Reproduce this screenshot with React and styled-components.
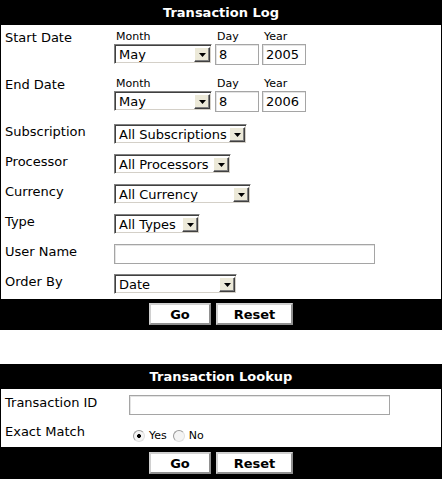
import styled, { createGlobalStyle } from "styled-components";

const GlobalStyle = createGlobalStyle`
  body {
    margin: 0;
    background: #ffffff;
    font-family: "DejaVu Sans", Verdana, sans-serif;
    font-size: 13px;
    color: #000000;
  }
`;

function Select({ value, width }) {
  return (
    <SelectBox $w={width}>
      <SelectValue>{value}</SelectValue>
      <ArrowButton>
        <svg width="7" height="4" viewBox="0 0 7 4">
          <path d="M0 0h7L3.5 4z" fill="#000" />
        </svg>
      </ArrowButton>
    </SelectBox>
  );
}

function Radio({ checked, label }) {
  return (
    <RadioLabel>
      <RadioDot $checked={checked} />
      {label}
    </RadioLabel>
  );
}

function DateRow({ label, year }) {
  return (
    <FormRow $label={109} $top={5} $bottom={7}>
      <RowLabel>{label}</RowLabel>
      <DateGroup>
        <DateField>
          <SmallLabel>Month</SmallLabel>
          <Select value="May" width={98} />
        </DateField>
        <DateField>
          <SmallLabel>Day</SmallLabel>
          <TextInput $w={44} $h={21} defaultValue="8" />
        </DateField>
        <DateField>
          <SmallLabel>Year</SmallLabel>
          <TextInput $w={44} $h={21} defaultValue={year} />
        </DateField>
      </DateGroup>
    </FormRow>
  );
}

export default function App() {
  return (
    <Page>
      <GlobalStyle />
      <Panel>
        <PanelHeader>Transaction Log</PanelHeader>
        <PanelBody>
          <DateRow label="Start Date" year="2005" />
          <DateRow label="End Date" year="2006" />
          <FormRow $label={109}>
            <RowLabel>Subscription</RowLabel>
            <Select value="All Subscriptions" width={133} />
          </FormRow>
          <FormRow $label={109}>
            <RowLabel>Processor</RowLabel>
            <Select value="All Processors" width={117} />
          </FormRow>
          <FormRow $label={109}>
            <RowLabel>Currency</RowLabel>
            <Select value="All Currency" width={137} />
          </FormRow>
          <FormRow $label={109}>
            <RowLabel>Type</RowLabel>
            <Select value="All Types" width={86} />
          </FormRow>
          <FormRow $label={109}>
            <RowLabel>User Name</RowLabel>
            <TextInput $w={261} $h={20} />
          </FormRow>
          <FormRow $label={109}>
            <RowLabel>Order By</RowLabel>
            <Select value="Date" width={123} />
          </FormRow>
        </PanelBody>
        <PanelFooter $top={4}>
          <Button $w={62}>Go</Button>
          <Button $w={77}>Reset</Button>
        </PanelFooter>
      </Panel>

      <Panel>
        <PanelHeader>Transaction Lookup</PanelHeader>
        <PanelBody>
          <FormRow $label={124} $top={6} $bottom={4}>
            <RowLabel>Transaction ID</RowLabel>
            <TextInput $w={261} $h={20} />
          </FormRow>
          <FormRow $label={124} $top={5} $bottom={5}>
            <RowLabel>Exact Match</RowLabel>
            <RadioGroup>
              <Radio checked label="Yes" />
              <Radio label="No" />
            </RadioGroup>
          </FormRow>
        </PanelBody>
        <PanelFooter $top={5}>
          <Button $w={62}>Go</Button>
          <Button $w={77}>Reset</Button>
        </PanelFooter>
      </Panel>
    </Page>
  );
}

const Page = styled.div`
  display: flex;
  flex-direction: column;
  gap: 34px;
  width: 442px;
`;

const Panel = styled.section`
  box-sizing: border-box;
  width: 442px;
  border: 1px solid #000000;
  border-top: none;
  background: #000000;
`;

const PanelHeader = styled.div`
  height: 25px;
  display: flex;
  align-items: center;
  justify-content: center;
  color: #ffffff;
  font-weight: bold;
  font-size: 13px;
`;

const PanelBody = styled.div`
  background: #ffffff;
  display: flex;
  flex-direction: column;
`;

const FormRow = styled.div`
  display: grid;
  grid-template-columns: ${(p) => p.$label}px 1fr;
  align-items: start;
  padding: ${(p) => p.$top ?? 5}px 0 ${(p) => p.$bottom ?? 5}px 4px;
`;

const RowLabel = styled.div`
  font-size: 13px;
  line-height: 15px;
`;

const DateGroup = styled.div`
  display: flex;
  gap: 3px;
`;

const DateField = styled.div`
  display: flex;
  flex-direction: column;
`;

const SmallLabel = styled.div`
  font-size: 11px;
  line-height: 14px;
  padding-left: 2px;
`;

const SelectBox = styled.div`
  box-sizing: border-box;
  width: ${(p) => p.$w}px;
  height: 20px;
  display: flex;
  align-items: center;
  border: 1px solid;
  border-color: #808080 #ffffff #ffffff #808080;
  box-shadow: inset 1px 1px 0 #404040, inset -1px -1px 0 #d4d0c8;
  background: #ffffff;
  padding: 2px 1px 1px 2px;
`;

const SelectValue = styled.span`
  flex: 1;
  font-size: 13px;
  padding-left: 2px;
  white-space: nowrap;
  overflow: hidden;
`;

const ArrowButton = styled.span`
  box-sizing: border-box;
  width: 16px;
  height: 15px;
  display: flex;
  align-items: center;
  justify-content: center;
  background: #ece9d8;
  border: 1px solid;
  border-color: #ffffff #404040 #404040 #ffffff;
  box-shadow: inset -1px -1px 0 #808080;
`;

const TextInput = styled.input`
  box-sizing: border-box;
  width: ${(p) => p.$w}px;
  height: ${(p) => p.$h}px;
  margin: 0;
  padding: 0 3px;
  border: 1px solid #a5a5a5;
  box-shadow: inset 1px 1px 0 #e4e4e4;
  font-family: inherit;
  font-size: 13px;
  color: #000000;
  outline: none;
`;

const RadioGroup = styled.div`
  display: flex;
  gap: 6px;
  padding: 5px 0 0 4px;
`;

const RadioLabel = styled.label`
  display: flex;
  align-items: center;
  gap: 4px;
  font-size: 11px;
`;

const RadioDot = styled.span`
  box-sizing: border-box;
  width: 12px;
  height: 12px;
  border-radius: 50%;
  border: 1px solid;
  border-color: #9a9a9a #e0e0e0 #e0e0e0 #9a9a9a;
  background: ${(p) =>
    p.$checked
      ? "radial-gradient(circle, #000 0 1.8px, #f4f4f4 2.2px)"
      : "#f4f4f4"};
`;

const PanelFooter = styled.div`
  display: flex;
  justify-content: center;
  gap: 5px;
  padding: ${(p) => p.$top}px 0 4px;
`;

const Button = styled.button`
  box-sizing: border-box;
  width: ${(p) => p.$w}px;
  height: 22px;
  margin: 0;
  padding: 0;
  background: #ffffff;
  border: 2px solid;
  border-color: #d0d0d0 #909090 #909090 #d0d0d0;
  font-family: inherit;
  font-size: 13px;
  font-weight: bold;
  color: #000000;
`;
